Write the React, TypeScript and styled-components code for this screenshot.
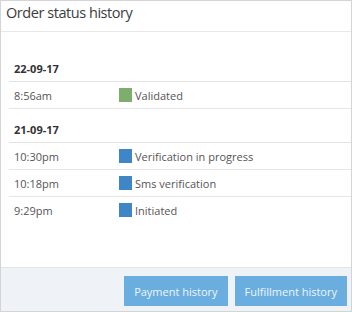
import styled, { createGlobalStyle } from "styled-components";

const GlobalStyle = createGlobalStyle`
  html, body {
    margin: 0;
    padding: 0;
    background: #ffffff;
  }
  body {
    font-family: "Open Sans", "Liberation Sans", sans-serif;
  }
`;

type Status = "done" | "pending";

type HistoryEntry = {
  time: string;
  label: string;
  status: Status;
};

type HistoryDay = {
  date: string;
  entries: HistoryEntry[];
};

const history: HistoryDay[] = [
  {
    date: "22-09-17",
    entries: [{ time: "8:56am", label: "Validated", status: "done" }],
  },
  {
    date: "21-09-17",
    entries: [
      { time: "10:30pm", label: "Verification in progress", status: "pending" },
      { time: "10:18pm", label: "Sms verification", status: "pending" },
      { time: "9:29pm", label: "Initiated", status: "pending" },
    ],
  },
];

const Panel = styled.div`
  box-sizing: border-box;
  width: 352px;
  height: 312px;
  border: 1px solid #d4d4d4;
  display: flex;
  flex-direction: column;
  background: #ffffff;
`;

const Header = styled.div`
  height: 31px;
  box-sizing: border-box;
  border-bottom: 1px solid #e8e8e8;
  padding: 2px 5px 0;
`;

const Title = styled.h2`
  margin: 0;
  font-size: 14.5px;
  line-height: 20px;
  font-weight: 400;
  color: #3c3c3c;
  letter-spacing: -0.45px;
`;

const Body = styled.div`
  flex: 1;
  padding: 16px 0 0 8px;
`;

const DateRow = styled.div`
  height: 34px;
  box-sizing: border-box;
  padding: 0 5px 5px;
  display: flex;
  align-items: flex-end;
  border-bottom: 1px solid #e4e4e4;
  font-size: 11px;
  font-weight: 700;
  color: #333333;
`;

const EntryRow = styled.div<{ $last?: boolean }>`
  height: 27px;
  box-sizing: border-box;
  display: grid;
  grid-template-columns: 105px 1fr;
  align-items: center;
  padding: 0 5px;
  border-bottom: 1px solid ${(p) => (p.$last ? "transparent" : "#e6e6e6")};
  font-size: 11px;
  color: #555555;
`;

const StatusCell = styled.div`
  display: flex;
  align-items: center;
  gap: 3px;
`;

const Swatch = styled.span<{ $status: Status }>`
  flex: none;
  width: 13px;
  height: 14px;
  background: ${(p) => (p.$status === "done" ? "#7dae6c" : "#3e86c5")};
`;

const Footer = styled.div`
  height: 44px;
  box-sizing: border-box;
  border-top: 1px solid #e2e6ea;
  background: #eff2f6;
  display: flex;
  justify-content: flex-end;
  align-items: flex-start;
  gap: 7px;
  padding: 8px 4px 0 0;
`;

const ActionButton = styled.button`
  height: 30px;
  border: none;
  background: #6aaedf;
  color: #eef5fb;
  font-family: "Open Sans", "Liberation Sans", sans-serif;
  font-size: 11px;
  padding: 0 10px;
  cursor: pointer;
`;

export default function App() {
  return (
    <>
      <GlobalStyle />
      <Panel>
        <Header>
          <Title>Order status history</Title>
        </Header>
        <Body>
          {history.map((day, di) => (
            <div key={day.date}>
              <DateRow>{day.date}</DateRow>
              {day.entries.map((entry, ei) => (
                <EntryRow
                  key={entry.time}
                  $last={di === history.length - 1 && ei === day.entries.length - 1}
                >
                  <span>{entry.time}</span>
                  <StatusCell>
                    <Swatch $status={entry.status} />
                    {entry.label}
                  </StatusCell>
                </EntryRow>
              ))}
            </div>
          ))}
        </Body>
        <Footer>
          <ActionButton>Payment history</ActionButton>
          <ActionButton>Fulfillment history</ActionButton>
        </Footer>
      </Panel>
    </>
  );
}
